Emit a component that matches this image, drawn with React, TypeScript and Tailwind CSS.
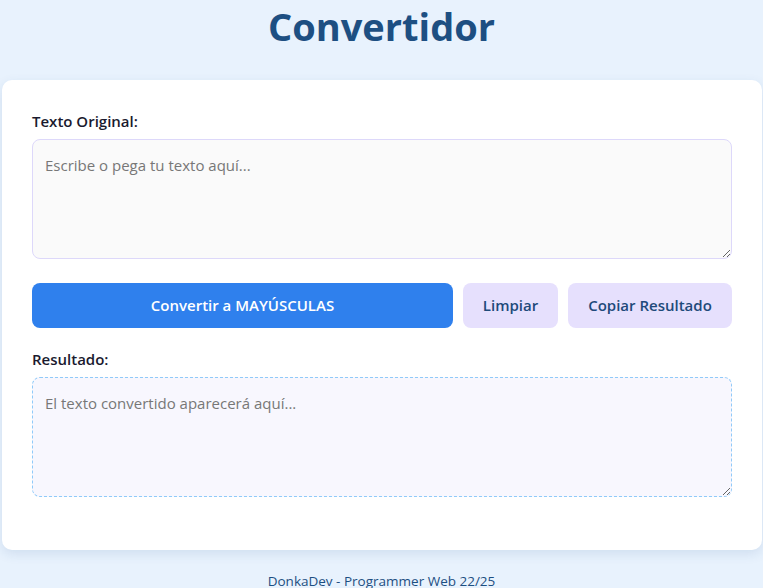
export default function App() {
  return (
    <div
      className="min-h-[588px] bg-[#e8f2fd] px-[2px] text-[#1a1a2e]"
      style={{ fontFamily: '"Open Sans", "Noto Sans", sans-serif' }}
    >
      <h1 className="text-center text-[38px] font-bold leading-[52px] text-[#1d4f82]">
        Convertidor
      </h1>

      <div className="mt-[28px] w-[760px] rounded-[10px] bg-white px-[30px] pt-[30px] pb-[53px] shadow-[0_4px_12px_rgba(30,80,140,0.12)]">
        <label className="block text-[15px] font-semibold leading-[22px]">
          Texto Original:
        </label>
        <textarea
          className="mt-[7px] block h-[120px] w-full rounded-[8px] border border-[#ddd8fa] bg-[#fafafa] px-[12px] py-[13px] text-[15px] leading-[24px] placeholder:text-[#777777] focus:outline-none"
          placeholder="Escribe o pega tu texto aquí..."
        />

        <div className="mt-[24px] flex gap-[10px]">
          <button className="h-[45px] flex-1 rounded-[8px] bg-[#2f80ed] text-[15px] font-semibold text-white">
            Convertir a MAYÚSCULAS
          </button>
          <button className="h-[45px] w-[95px] rounded-[8px] bg-[#e6e0fd] text-[15px] font-semibold text-[#1e4a7a]">
            Limpiar
          </button>
          <button className="h-[45px] w-[164px] rounded-[8px] bg-[#e6e0fd] text-[15px] font-semibold text-[#1e4a7a]">
            Copiar Resultado
          </button>
        </div>

        <label className="mt-[20px] block text-[15px] font-semibold leading-[22px]">
          Resultado:
        </label>
        <textarea
          readOnly
          className="mt-[7px] block h-[120px] w-full rounded-[8px] border border-dashed border-[#90caf9] bg-[#f8f7fe] px-[12px] py-[13px] text-[15px] leading-[24px] placeholder:text-[#777777] focus:outline-none"
          placeholder="El texto convertido aparecerá aquí..."
        />
      </div>

      <footer className="pt-[21px] text-center text-[13.5px] leading-[20px] text-[#1d4f82]">
        DonkaDev - Programmer Web 22/25
      </footer>
    </div>
  );
}
